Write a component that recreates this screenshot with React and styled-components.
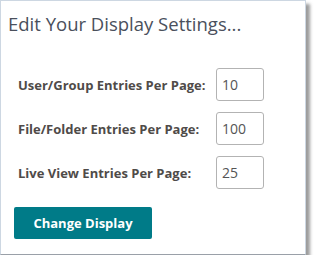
import React from "react";
import styled, { createGlobalStyle } from "styled-components";

const GlobalStyle = createGlobalStyle`
  body {
    margin: 0;
    background: #ffffff;
    font-family: "Open Sans", "Liberation Sans", sans-serif;
  }
`;

const Panel = styled.div`
  width: 306px;
  height: 255px;
  box-sizing: border-box;
  border: 1px solid #cdd7e2;
  border-bottom-color: #9aa0a8;
  background: #ffffff;
  box-shadow: 4px 4px 3px rgba(60, 60, 60, 0.5);
  padding: 10px 7px;
`;

const Title = styled.h2`
  margin: 0;
  font-size: 18.5px;
  font-weight: 400;
  line-height: 26px;
  color: #4a505c;
`;

const Form = styled.div`
  margin: 31px 0 0 10px;
  display: grid;
  grid-template-columns: 198px 48px;
  row-gap: 11px;
  align-items: center;
`;

const Label = styled.label`
  font-size: 13px;
  font-weight: 700;
  color: #4f4b49;
`;

const NumberInput = styled.input`
  width: 48px;
  height: 33px;
  box-sizing: border-box;
  border: 1px solid #b3b3b3;
  border-radius: 3px;
  padding: 0 5px;
  font-family: "Open Sans", "Liberation Sans", sans-serif;
  font-size: 14px;
  color: #555555;
  outline: none;
`;

const Button = styled.button`
  margin: 18px 0 0 6px;
  width: 138px;
  height: 32px;
  border: none;
  border-radius: 2px;
  background: #007b88;
  color: #ffffff;
  font-family: "Open Sans", "Liberation Sans", sans-serif;
  font-size: 13px;
  font-weight: 700;
  cursor: pointer;
`;

const settings = [
  { label: "User/Group Entries Per Page:", value: "10" },
  { label: "File/Folder Entries Per Page:", value: "100" },
  { label: "Live View Entries Per Page:", value: "25" },
];

export default function App() {
  return (
    <>
      <GlobalStyle />
      <Panel>
        <Title>Edit Your Display Settings...</Title>
        <Form>
          {settings.map((s) => (
            <React.Fragment key={s.label}>
              <Label>{s.label}</Label>
              <NumberInput defaultValue={s.value} />
            </React.Fragment>
          ))}
        </Form>
        <Button>Change Display</Button>
      </Panel>
    </>
  );
}
